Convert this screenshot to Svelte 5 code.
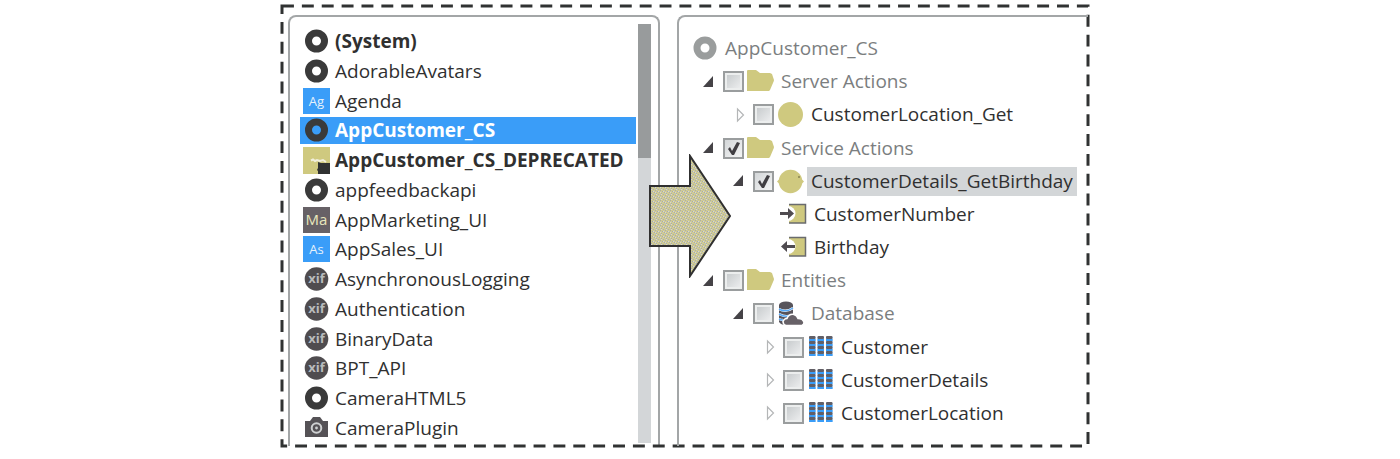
<script>
  let selected = $state('AppCustomer_CS');

  const modules = [
    { name: '(System)', icon: 'ring', bold: true },
    { name: 'AdorableAvatars', icon: 'ring' },
    { name: 'Agenda', icon: 'tile', short: 'Ag' },
    { name: 'AppCustomer_CS', icon: 'ring', bold: true },
    { name: 'AppCustomer_CS_DEPRECATED', icon: 'deprecated', bold: true },
    { name: 'appfeedbackapi', icon: 'ring' },
    { name: 'AppMarketing_UI', icon: 'tile', short: 'Ma', dark: true },
    { name: 'AppSales_UI', icon: 'tile', short: 'As' },
    { name: 'AsynchronousLogging', icon: 'xif' },
    { name: 'Authentication', icon: 'xif' },
    { name: 'BinaryData', icon: 'xif' },
    { name: 'BPT_API', icon: 'xif' },
    { name: 'CameraHTML5', icon: 'ring' },
    { name: 'CameraPlugin', icon: 'camera' }
  ];

  let nodes = $state([
    { name: 'AppCustomer_CS', icon: 'root', kind: 'root', muted: true },
    { name: 'Server Actions', icon: 'folder', level: 1, open: true, muted: true },
    { name: 'CustomerLocation_Get', icon: 'action', level: 2 },
    { name: 'Service Actions', icon: 'folder', level: 1, open: true, checked: true, muted: true },
    { name: 'CustomerDetails_GetBirthday', icon: 'service', level: 2, open: true, checked: true, current: true },
    { name: 'CustomerNumber', icon: 'input', kind: 'param' },
    { name: 'Birthday', icon: 'output', kind: 'param' },
    { name: 'Entities', icon: 'folder', level: 1, open: true, muted: true },
    { name: 'Database', icon: 'database', level: 2, open: true, muted: true },
    { name: 'Customer', icon: 'entity', level: 3 },
    { name: 'CustomerDetails', icon: 'entity', level: 3 },
    { name: 'CustomerLocation', icon: 'entity', level: 3 }
  ]);
</script>

{#snippet glyph(kind, short, dark)}
  <svg class="icon" viewBox="0 0 27 27" aria-hidden="true">
    {#if kind === 'ring'}
      <circle cx="13.5" cy="13" r="8" fill="none" stroke="#3a3a3a" stroke-width="7" />
    {:else if kind === 'root'}
      <circle cx="14" cy="13" r="8" fill="none" stroke="#9a9d9d" stroke-width="7" />
    {:else if kind === 'tile'}
      <rect width="27" height="26" fill={dark ? '#676166' : '#3a9df8'} />
      <text x="13.5" y="18" text-anchor="middle" font-size={dark ? 15 : 13} fill={dark ? '#e9e7bd' : '#e6f1fb'}>{short}</text>
    {:else if kind === 'deprecated'}
      <rect width="27" height="27" fill="#cfc97f" />
      <path d="M8 13.500l2-1 2 1.500 2-1 3 1 3-1 3 2" fill="none" stroke="#f1efdc" stroke-width="2" />
      <path d="M15 15l3 1h9v11H15v-3l-1-1 1-2z" fill="#303232" />
    {:else if kind === 'xif'}
      <circle cx="13.5" cy="13" r="11.8" fill="#4f4c4f" />
      <text x="13.5" y="17" text-anchor="middle" font-size="13" font-weight="700" fill="#b9bbbc">xif</text>
    {:else if kind === 'camera'}
      <path d="M2 6h5l3-4h7l3 4h5v16H2z" fill="#555256" />
      <circle cx="13.5" cy="13" r="4.8" fill="none" stroke="#cfd1d2" stroke-width="2" />
      <circle cx="13.5" cy="13" r="1.4" fill="#cfd1d2" />
    {:else if kind === 'folder'}
      <path d="M0 3q0-1 1-1h8l4 3h10l2 1 2 6q0 1-1 3l-3 7-1 1H0z" fill="#cfc97f" />
    {:else if kind === 'action'}
      <circle cx="13.5" cy="13.5" r="12.5" fill="#cfc97f" />
    {:else if kind === 'service'}
      <circle cx="13.5" cy="13.5" r="11.8" fill="#cfc97f" />
      <path d="M0 13.500l4-4v8zM27 13.500l-4-4v8z" fill="#cfc97f" />
      <circle cx="22" cy="9" r=".8" fill="#55512f" />
    {:else if kind === 'input' || kind === 'output'}
      <rect x="9" y="3" width="17" height="19" fill="#cfc97f" />
      <path d="M9 3.500h16.500v18.500H9" fill="none" stroke="#6a6b6e" stroke-width="1.500" />
      <circle cx="8" cy="12.500" r="7.500" fill="#fff" />
      {#if kind === 'input'}
        <path d="M0 11h8V7l6 5.500-6 5.500v-4H0z" fill="#4f4b50" />
      {:else}
        <path d="M15 11H7V7L1 12.500 7 18v-4h8z" fill="#4f4b50" />
      {/if}
    {:else if kind === 'database'}
      <path d="M2 5v17q2 3 5 3l9-7V5z" fill="#57545b" />
      <ellipse cx="9" cy="5" rx="7" ry="3.500" fill="#57545b" />
      <path d="M2 9q7 4 14-1M2 14q7 4 13 1M2 19q2 1 4 1" fill="none" stroke="#fff" stroke-width="2.500" />
      <path d="M2 9q7 4 14-1M2 14q7 4 13 1M2 19q2 1 4 1" fill="none" stroke="#55a8f6" stroke-width="1.500" />
      <path d="M9 25.500q-3-1-3-4 1-3 4-3 2-5 7-4 3 1 4 4 5 0 6 4 0 2-2 3z" fill="#676167" stroke="#fff" stroke-width="1.500" />
    {:else if kind === 'entity'}
      {#each [2, 10.500, 19] as x}
        <rect {x} y="3" width="6.5" height="19" fill="#8bc3f6" />
        {#each [2, 7, 12, 17] as y}
          <rect {x} y={y + 3} width="6.5" height="2" fill="#3a9df8" />
          <rect {x} {y} width="6.5" height="3" rx="1" fill="#625f66" />
        {/each}
      {/each}
    {/if}
  </svg>
{/snippet}

<main class="page">
  <div class="frame">
    <svg class="dashes" aria-hidden="true">
      <rect width="100%" height="100%" pathLength="2508" />
    </svg>

    <section class="panel modules">
      <ul class="list">
        {#each modules as m}
          <li>
            <button
              class="module"
              class:bold={m.bold}
              class:selected={selected === m.name}
              onclick={() => (selected = m.name)}
            >
              {@render glyph(m.icon, m.short, m.dark)}
              <span>{m.name}</span>
            </button>
          </li>
        {/each}
      </ul>
      <div class="track"><div class="thumb"></div></div>
    </section>

    <section class="panel details">
      <ul class="tree">
        {#each nodes as n, i}
          <li class="node {n.kind ?? `level-${n.level}`}" class:muted={n.muted}>
            {#if n.level}
              <button class="twisty" aria-label={n.name} aria-expanded={!!n.open}>
                <svg viewBox="0 0 20 20" aria-hidden="true">
                  {#if n.open}
                    <path d="M13 4v11H3z" fill="#454347" />
                  {:else}
                    <path d="M7.500 4v12l6-6z" fill="#fff" stroke="#b4b6b7" stroke-width="1.200" />
                  {/if}
                </svg>
              </button>
              <input id="node-{i}" type="checkbox" bind:checked={n.checked} />
            {/if}
            {@render glyph(n.icon)}
            {#if n.level}
              <label class="name" class:current={n.current} for="node-{i}">{n.name}</label>
            {:else}
              <span class="name">{n.name}</span>
            {/if}
          </li>
        {/each}
      </ul>

      <svg class="arrow" viewBox="0 0 84 124" aria-hidden="true">
        <defs>
          <pattern id="speckle" width="5" height="5" patternUnits="userSpaceOnUse">
            <rect width="5" height="5" fill="#cfcb94" />
            <path d="M0 0h1v1H0zM2 1h1v1H2zM4 2h1v1H4zM1 3h1v1H1zM3 4h1v1H3z" fill="#a9acae" />
            <path d="M3 0h1v1H3zM0 2h1v1H0zM2 3h1v1H2z" fill="#d4d6d8" />
          </pattern>
        </defs>
        <path d="M2 32h40V2l40 60-40 60V92H2z" fill="url(#speckle)" stroke="#303030" stroke-width="2" />
      </svg>
    </section>
  </div>
</main>

<style>
  :global(body) {
    margin: 0;
    background: #fff;
  }

  .page {
    box-sizing: border-box;
    min-height: 100vh;
    padding: 6px 0 13px;
    display: grid;
    grid-template-columns: 282fr 806fr 312fr;
    font-family: 'Open Sans', 'Noto Sans', sans-serif;
    font-size: 19px;
    line-height: 27px;
    color: #303030;
  }

  .frame {
    grid-column: 2;
    position: relative;
    display: grid;
    grid-template-columns: 372fr 411fr;
    gap: 17px;
    padding: 9px 0 0 6px;
  }

  .dashes {
    position: absolute;
    inset: 0;
    width: 100%;
    height: 100%;
    overflow: visible;
    pointer-events: none;
  }

  .dashes rect {
    fill: none;
    stroke: #303232;
    stroke-width: 3;
    stroke-dasharray: 12 8;
  }

  .panel {
    display: flex;
    border: 2px solid #a3a6a7;
    border-bottom: 0;
    border-radius: 8px 8px 0 0;
  }

  .modules {
    padding: 7px 7px 3px 10px;
    gap: 2px;
  }

  .details {
    position: relative;
    border-right: 0;
    border-radius: 8px 0 0 0;
  }

  ul {
    list-style: none;
    margin: 0;
    padding: 0;
    flex: 1;
    display: flex;
    flex-direction: column;
    justify-content: space-between;
  }

  .list {
    padding: 4px 0 1px;
  }

  .module {
    width: 100%;
    display: flex;
    align-items: center;
    gap: 5px;
    padding: 0 3px;
    border: 0;
    background: none;
    color: inherit;
    font: inherit;
    text-align: left;
    white-space: nowrap;
  }

  .bold {
    font-weight: 700;
  }

  .selected {
    background: #3a9df8;
    color: #fff;
  }

  .icon {
    flex: none;
    width: 27px;
    height: 27px;
  }

  .track {
    width: 13px;
    background: #d3d6d8;
  }

  .thumb {
    height: 32%;
    background: #989b9c;
  }

  .tree {
    padding: 17px 0 18px;
  }

  .node {
    display: flex;
    align-items: center;
    gap: 3px;
    height: 29px;
    padding-left: 21px;
    white-space: nowrap;
  }

  .root {
    padding-left: 12px;
  }

  .level-2 {
    padding-left: 51px;
  }

  .level-3 {
    padding-left: 81px;
  }

  .param {
    padding-left: 101px;
  }

  .muted {
    color: #7b7e80;
  }

  .twisty {
    width: 20px;
    height: 20px;
    padding: 0;
    border: 0;
    background: none;
  }

  .twisty svg {
    display: block;
  }

  input {
    appearance: none;
    box-sizing: border-box;
    width: 21px;
    height: 21px;
    margin: 0;
    border: 2px solid #9a9d9e;
    outline: 2px solid #eceeee;
    outline-offset: -4px;
    background: linear-gradient(135deg, #c3c7c9, #f0f1f2);
  }

  input:checked {
    outline: 0;
    background:
      url("data:image/svg+xml,%3Csvg xmlns='http://www.w3.org/2000/svg' viewBox='0 0 17 17'%3E%3Cpath d='M3 9l2-2 2 4 5-9 3 1-6 12H7z' fill='%23403e42'/%3E%3C/svg%3E"),
      linear-gradient(135deg, #d3d6d8, #f4f5f5);
  }

  .name {
    padding: 0 4px;
    line-height: 29px;
  }

  .current {
    background: #d3d6d8;
  }

  .arrow {
    position: absolute;
    top: 137px;
    left: -31px;
    width: 84px;
    height: 124px;
  }
</style>
